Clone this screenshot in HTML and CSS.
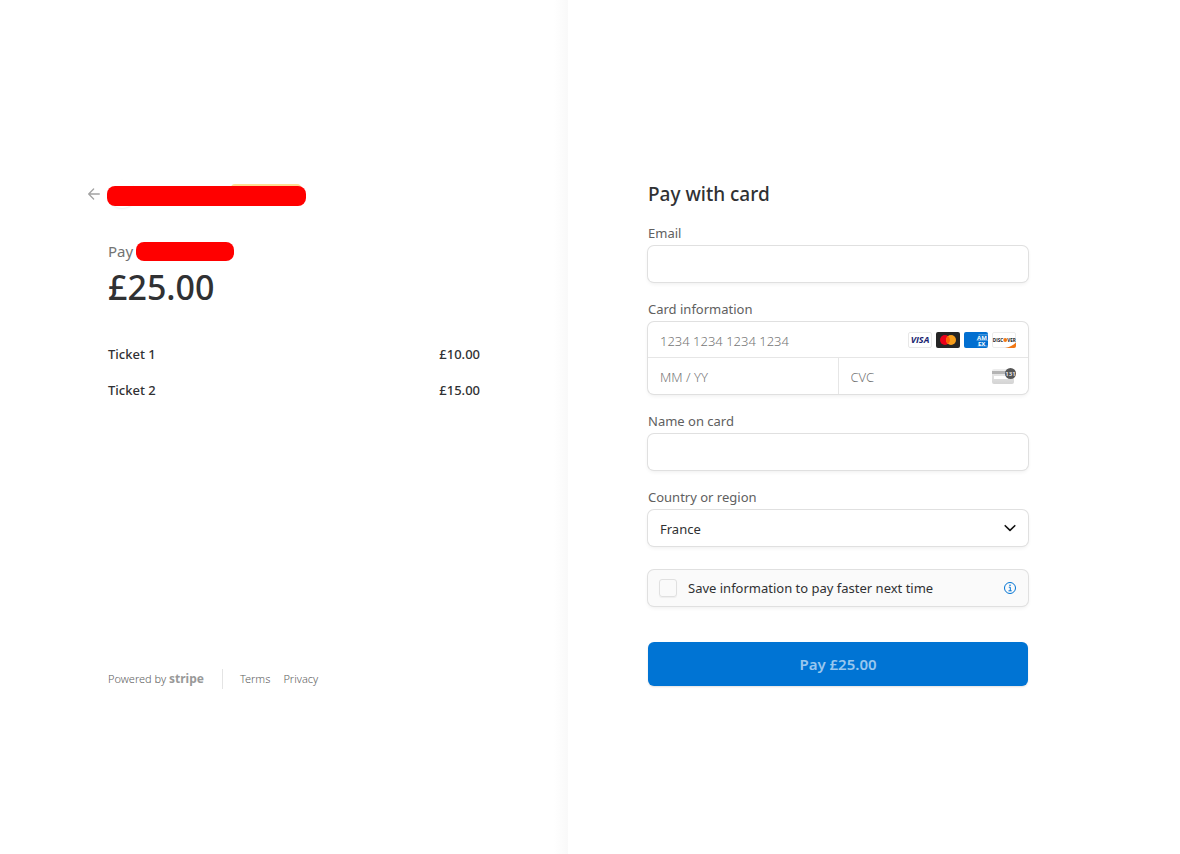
FILE: index.html
```html
<!DOCTYPE html>
<html lang="en">
<head>
    <meta charset="UTF-8">
    <meta name="viewport" content="width=device-width, initial-scale=1.0">
    <title>Pay £25.00</title>
    <link rel="stylesheet" href="styles.css">
</head>
<body>
    <div class="app">
        <section class="overview">
            <header class="header">
                <a href="#" class="back" aria-label="Back">
                    <svg width="12" height="12" viewBox="0 0 12 12" fill="none" stroke="#a3a3a3" stroke-width="1.3" stroke-linecap="round" stroke-linejoin="round">
                        <path d="M11.3 6H.9M5.6 1 .7 6l4.9 5"/>
                    </svg>
                </a>
                <div class="merchant">
                    <span class="avatar"></span>
                    <span class="badge"></span>
                    <span class="redacted redacted-merchant"></span>
                </div>
            </header>

            <div class="summary">
                <p class="pay-to">Pay <span class="redacted redacted-name"></span></p>
                <p class="amount">£25.00</p>
                <ul class="items">
                    <li><span>Ticket 1</span><span>£10.00</span></li>
                    <li><span>Ticket 2</span><span>£15.00</span></li>
                </ul>
            </div>

            <footer class="footer">
                <a href="#" class="powered">Powered by <b>stripe</b></a>
                <a href="#" class="terms">Terms</a>
                <a href="#">Privacy</a>
            </footer>
        </section>

        <main class="payment">
            <form class="form">
                <h1>Pay with card</h1>

                <div class="form-group">
                    <label for="email">Email</label>
                    <input type="email" id="email" class="field">
                </div>

                <div class="form-group">
                    <label for="cardNumber">Card information</label>
                    <div class="card-box">
                        <div class="card-cell">
                            <input type="text" id="cardNumber" placeholder="1234 1234 1234 1234">
                            <div class="brands">
                                <svg width="24" height="16" viewBox="0 0 24 16">
                                    <rect x=".5" y=".5" width="23" height="15" rx="1.5" fill="#fff" stroke="#e8e8e8"/>
                                    <text x="12" y="11" text-anchor="middle" font-family="Open Sans" font-size="9" font-weight="700" font-style="italic" fill="#1a1f71">VISA</text>
                                </svg>
                                <svg width="24" height="16" viewBox="0 0 24 16">
                                    <rect width="24" height="16" rx="2" fill="#252525"/>
                                    <circle cx="9" cy="8" r="5" fill="#eb001b"/>
                                    <circle cx="15" cy="8" r="5" fill="#f79e1b"/>
                                    <path d="M12 4a5 5 0 0 1 0 8 5 5 0 0 1 0-8z" fill="#ff5f00"/>
                                </svg>
                                <svg width="24" height="16" viewBox="0 0 24 16">
                                    <rect width="24" height="16" rx="2" fill="#016fd0"/>
                                    <path d="M14.500 2.800H24M12.500 8.300H24M13.500 14H24" stroke="#fff" stroke-width=".6" opacity=".6"/>
                                    <text x="13" y="7.500" font-family="Open Sans" font-size="6" font-weight="700" fill="#fff">AM</text>
                                    <text x="14" y="13.500" font-family="Open Sans" font-size="6" font-weight="700" fill="#fff">EX</text>
                                </svg>
                                <svg width="24" height="16" viewBox="0 0 24 16">
                                    <rect x=".5" y=".5" width="23" height="15" rx="1.5" fill="#fff" stroke="#ececec"/>
                                    <path d="M24 10.500V14a2 2 0 0 1-2 2h-9c4.500-1 8-2.500 11-5.500z" fill="#f27712"/>
                                    <text x=".8" y="9.800" font-family="Open Sans" font-size="4.600" font-weight="700" fill="#222">DISC</text>
                                    <circle cx="13.200" cy="8" r="1.900" fill="#f27712"/>
                                    <text x="15.200" y="9.800" font-family="Open Sans" font-size="4.600" font-weight="700" fill="#222">VER</text>
                                </svg>
                            </div>
                        </div>
                        <div class="card-row">
                            <div class="card-cell">
                                <input type="text" placeholder="MM / YY" aria-label="Expiry date">
                            </div>
                            <div class="card-cell">
                                <input type="text" placeholder="CVC" aria-label="CVC">
                                <svg width="24" height="16" viewBox="0 0 24 16">
                                    <defs>
                                        <linearGradient id="plastic" x1="0" y1="0" x2="0" y2="1">
                                            <stop offset="0" stop-color="#eee"/>
                                            <stop offset="1" stop-color="#d4d4d4"/>
                                        </linearGradient>
                                    </defs>
                                    <rect y="1" width="22" height="15" rx="2" fill="url(#plastic)"/>
                                    <rect y="3" width="22" height="3" fill="#b4b4b4"/>
                                    <rect x="2" y="8" width="17" height="3" fill="#fff"/>
                                    <circle cx="18.500" cy="5.500" r="5.500" fill="#555"/>
                                    <text x="18.500" y="8" text-anchor="middle" font-family="Open Sans" font-size="6" font-weight="600" fill="#fff">131</text>
                                </svg>
                            </div>
                        </div>
                    </div>
                </div>

                <div class="form-group">
                    <label for="cardName">Name on card</label>
                    <input type="text" id="cardName" class="field">
                </div>

                <div class="form-group">
                    <label for="country">Country or region</label>
                    <div class="select-box">
                        <select id="country" class="field">
                            <option>France</option>
                            <option>United Kingdom</option>
                        </select>
                        <svg class="chevron" width="12" height="12" viewBox="0 0 12 12" fill="none" stroke="#111" stroke-width="1.6" stroke-linecap="round" stroke-linejoin="round">
                            <path d="M1.200 3.700 6 8.400l4.800-4.700"/>
                        </svg>
                    </div>
                </div>

                <div class="save">
                    <input type="checkbox" id="save">
                    <label for="save">Save information to pay faster next time</label>
                    <svg width="12" height="12" viewBox="0 0 12 12" fill="none" stroke="#0074d4">
                        <circle cx="6" cy="6" r="5.500"/>
                        <path d="M4.800 5.200H6.300V8.800M4.500 8.800h3.200"/>
                        <circle cx="6" cy="3.200" r=".8" fill="#0074d4" stroke="none"/>
                    </svg>
                </div>

                <button type="submit" class="submit">Pay £25.00</button>
            </form>
        </main>
    </div>
</body>
</html>
```
FILE: styles.css
```css
* {
    box-sizing: border-box;
}

body {
    margin: 0;
    font-family: "Noto Sans", "Open Sans", sans-serif;
    font-size: 13px;
    color: #303133;
    background: #fff;
}

a {
    color: inherit;
    text-decoration: none;
}

.app {
    display: grid;
    grid-template-columns: 142fr 153fr;
    min-height: 100vh;
}

/* Left side: what is being paid for */
.overview {
    display: flex;
    flex-direction: column;
    padding: 180px 88px 165px;
    background: linear-gradient(to left, #f9f9f9, #fff 14px);
}

.header {
    display: flex;
    align-items: center;
    height: 28px;
}

.back {
    display: flex;
    width: 20px;
}

.merchant {
    position: relative;
    height: 28px;
    flex: 1;
}

.avatar {
    display: block;
    width: 28px;
    height: 28px;
    border-radius: 50%;
    background: #fff;
    box-shadow: 0 1px 2px rgba(0, 0, 0, 0.08);
}

.badge {
    position: absolute;
    top: 4px;
    left: 123px;
    width: 70px;
    height: 18px;
    border-radius: 4px;
    background: #ffde92;
}

.redacted {
    background: #f00;
    border-radius: 8px;
}

.redacted-merchant {
    position: absolute;
    top: 6px;
    left: -1px;
    width: 199px;
    height: 20px;
}

.redacted-name {
    width: 98px;
    height: 19px;
}

.summary {
    padding-left: 20px;
}

.pay-to {
    display: flex;
    align-items: center;
    gap: 3px;
    margin: 32px 0 0;
    font-size: 15px;
    line-height: 22px;
    color: #737373;
}

.amount {
    margin: 3px 0 35px;
    font-size: 34px;
    font-weight: 500;
    line-height: 44px;
}

.items {
    margin: 0;
    padding: 0;
    list-style: none;
    font-weight: 500;
}

.items li {
    display: flex;
    justify-content: space-between;
    margin-bottom: 16px;
    line-height: 20px;
}

.footer {
    display: flex;
    align-items: center;
    gap: 13px;
    margin-top: auto;
    padding-left: 20px;
    font-size: 11px;
    font-weight: 300;
    line-height: 20px;
    color: #606060;
}

.powered {
    padding-right: 18px;
    border-right: 1px solid #e4e4e4;
}

.powered b {
    font-size: 12px;
    font-weight: 700;
    color: #999;
}

.terms {
    margin-left: 4px;
}

/* Right side: card form */
.payment {
    padding: 182px 80px 80px;
}

.form {
    max-width: 380px;
}

h1 {
    margin: 0 0 18px;
    font-size: 19px;
    font-weight: 500;
    line-height: 24px;
}

.form-group {
    margin-bottom: 18px;
}

.form-group label {
    display: block;
    margin-bottom: 4px;
    line-height: 18px;
    color: #606060;
}

input,
select,
button {
    font-family: inherit;
    font-size: 13px;
    color: #303133;
}

.field,
.card-box,
.save {
    border: none;
    border-radius: 6px;
    background: #fff;
    box-shadow: 0 0 0 1px #e0e0e0, 0 2px 4px rgba(0, 0, 0, 0.07);
}

.field {
    display: block;
    width: 100%;
    height: 36px;
    padding: 0 12px;
}

.card-cell {
    display: flex;
    align-items: center;
    flex: 1;
    height: 35px;
    padding: 0 12px;
}

.card-cell input {
    flex: 1;
    width: 100%;
    min-width: 0;
    height: 30px;
    padding: 2px 0 0;
    border: none;
    background: none;
    outline: none;
}

.card-cell input::placeholder {
    font-weight: 300;
    color: #757575;
    opacity: 1;
}

.card-cell svg {
    flex: none;
}

.card-row {
    display: flex;
    border-top: 1px solid #e6e6e6;
}

.card-row .card-cell {
    height: 36px;
}

.card-row .card-cell + .card-cell {
    border-left: 1px solid #e6e6e6;
}

.brands {
    display: flex;
    gap: 4px;
}

.select-box {
    position: relative;
}

select.field {
    appearance: none;
    padding-top: 2px;
}

.chevron {
    position: absolute;
    top: 12px;
    right: 12px;
    pointer-events: none;
}

.save {
    display: flex;
    align-items: center;
    gap: 11px;
    height: 36px;
    margin-top: 24px;
    padding: 0 12px 0 11px;
    background: #fafafa;
}

.save label {
    flex: 1;
}

.save input {
    appearance: none;
    width: 18px;
    height: 18px;
    margin: 0;
    border: 1px solid #e0e0e0;
    border-radius: 3px;
    box-shadow: 0 1px 1px rgba(0, 0, 0, 0.05);
}

.submit {
    display: block;
    width: 100%;
    height: 44px;
    margin-top: 36px;
    border: none;
    border-radius: 6px;
    background: #0074d4;
    color: #99c7ee;
    font-size: 15px;
    font-weight: 600;
    box-shadow: 0 1px 2px rgba(0, 0, 0, 0.12);
}
```
